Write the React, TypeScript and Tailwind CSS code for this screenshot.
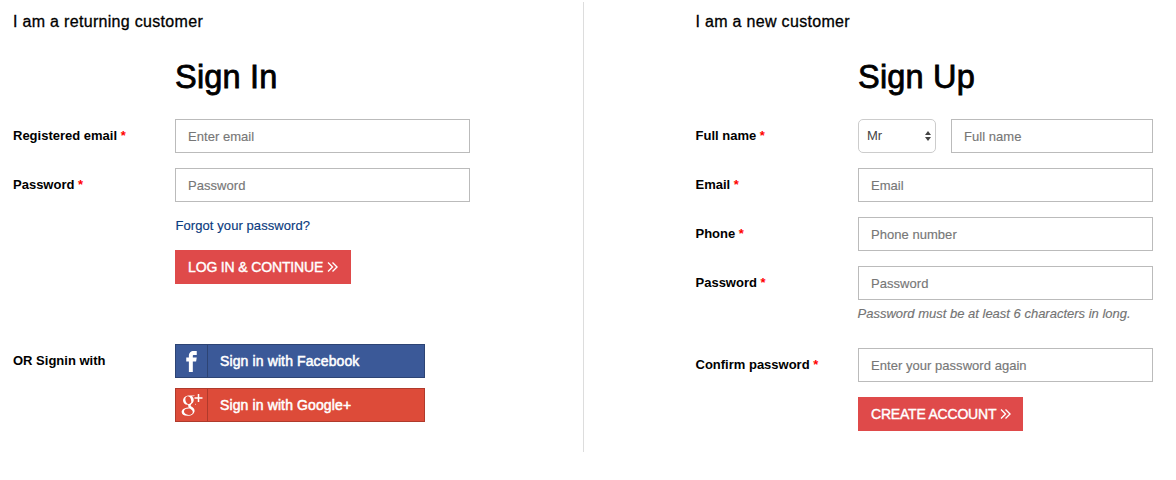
import type { ReactNode } from "react";
import { ImFacebook } from "react-icons/im";
import { TiSocialGooglePlus } from "react-icons/ti";

function Row({ label, required = true, children, labelWidth = "w-[162px]" }: { label: string; required?: boolean; children: ReactNode; labelWidth?: string }) {
  return (
    <div className="flex h-[34px] w-full">
      <div className={`shrink-0 whitespace-nowrap pt-2 text-[13px] font-bold leading-[18px] ${labelWidth}`}>
        {label} {required && <span className="text-[#f00]">*</span>}
      </div>
      {children}
    </div>
  );
}

function Field({ placeholder, type = "text" }: { placeholder: string; type?: string }) {
  return (
    <input
      type={type}
      placeholder={placeholder}
      className="h-[34px] min-w-0 flex-1 border border-[#bbb] bg-white px-3 text-[13px] tracking-[0.04px] text-[#555] outline-none placeholder:text-[#777] [-webkit-text-stroke:0.15px_#777]"
    />
  );
}

function ActionButton({ label, className }: { label: string; className: string }) {
  return (
    <button
      className={`flex h-[34px] items-center gap-[4px] whitespace-nowrap bg-[#df4a4a] pl-[13px] text-[14px] text-white [-webkit-text-stroke:0.4px_white] ${className}`}
    >
      <span>{label}</span>
      <svg width="11" height="12" viewBox="0 0 11 12" fill="none" stroke="currentColor" strokeWidth="1.4" className="shrink-0">
        <path d="M1 1.500 5.500 6 1 10.500M5.500 1.500 10 6l-4.500 4.500" />
      </svg>
    </button>
  );
}

function GooglePlusIcon() {
  return (
    <svg width="31" height="32" viewBox="0 0 31 32">
      <clipPath id="g-area">
        <rect width="19.600" height="32" />
      </clipPath>
      <g clipPath="url(#g-area)">
        <TiSocialGooglePlus x="-1.500" y="-0.500" size={33} />
      </g>
      <path d="M18.500 9h8M22.500 5v8" stroke="white" strokeWidth="1.500" />
    </svg>
  );
}

function SocialButton({ label, icon, className, dividerClass }: { label: string; icon: ReactNode; className: string; dividerClass: string }) {
  return (
    <button className={`flex h-[34px] w-[250px] items-center border text-white ${className}`}>
      <span className={`flex h-full w-8 shrink-0 items-center justify-center border-r ${dividerClass}`}>{icon}</span>
      <span className="whitespace-nowrap pl-3 text-[14px] tracking-[0.12px] [-webkit-text-stroke:0.5px_white]">{label}</span>
    </button>
  );
}

export default function App() {
  return (
    <div className="flex h-[480px] w-[1176px] overflow-hidden bg-white pt-[2px] font-['Liberation_Sans',Arial,sans-serif] text-black">
      <section className="h-[450px] w-[584px] shrink-0 border-r border-[#ddd] pl-[13px] pt-[10px]">
        <h2 className="text-[16px] leading-[20px] tracking-[0.31px] [-webkit-text-stroke:0.3px_black]">I am a returning customer</h2>
        <h1 className="ml-[162px] mt-[25px] text-[32.500px] leading-[40px] tracking-[0.200px] [-webkit-text-stroke:0.8px_black]">Sign In</h1>
        <form className="mt-[22px] flex w-[457px] flex-col">
          <Row label="Registered email"><Field placeholder="Enter email" /></Row>
          <div className="mt-[15px]"><Row label="Password"><Field placeholder="Password" type="password" /></Row></div>
          <a className="ml-[162.500px] mt-[14px] text-[13px] leading-[20px] tracking-[0.08px] text-[#0a3a7e] [-webkit-text-stroke:0.15px_#0a3a7e]">Forgot your password?</a>
          <ActionButton label="LOG IN & CONTINUE" className="ml-[162px] mt-[14px] w-[176px] tracking-[-0.15px]" />
          <div className="mt-[60px]">
            <Row label="OR Signin with" required={false}>
              <SocialButton label="Sign in with Facebook" className="border-[#2d4474] bg-[#3b5998]" dividerClass="border-[#2d4474]" icon={<ImFacebook size={21} />} />
            </Row>
          </div>
          <div className="ml-[162px] mt-[10px]">
            <SocialButton label="Sign in with Google+" className="border-[#b03a2b] bg-[#dd4b39]" dividerClass="border-[#b03a2b]" icon={<GooglePlusIcon />} />
          </div>
        </form>
      </section>
      <section className="w-[592px] pl-[111.500px] pt-[10px]">
        <h2 className="text-[16px] leading-[20px] tracking-[0.31px] [-webkit-text-stroke:0.3px_black]">I am a new customer</h2>
        <h1 className="ml-[162.500px] mt-[25px] text-[32.500px] leading-[40px] tracking-[0.200px] [-webkit-text-stroke:0.8px_black]">Sign Up</h1>
        <form className="mt-[22px] flex w-[457.500px] flex-col gap-[15px]">
          <Row label="Full name" labelWidth="w-[162.500px]">
            <button type="button" className="mr-[15px] flex h-[34px] w-[78px] shrink-0 items-center justify-between rounded-[5px] border border-[#ccc] pl-2 pr-1 text-[13px] text-[#444]">
              <span>Mr</span>
              <svg width="6" height="12" viewBox="0 0 6 12" fill="#444"><path d="M0 5 3 1l3 4ZM0 7h6l-3 4Z" /></svg>
            </button>
            <Field placeholder="Full name" />
          </Row>
          <Row label="Email" labelWidth="w-[162.500px]"><Field placeholder="Email" type="email" /></Row>
          <Row label="Phone" labelWidth="w-[162.500px]"><Field placeholder="Phone number" type="tel" /></Row>
          <div>
            <Row label="Password" labelWidth="w-[162.500px]"><Field placeholder="Password" type="password" /></Row>
            <p className="ml-[162px] mt-[4px] h-[29px] whitespace-nowrap text-[13px] italic leading-[20px] text-[#737373] [-webkit-text-stroke:0.15px_#737373]">Password must be at least 6 characters in long.</p>
          </div>
          <Row label="Confirm password" labelWidth="w-[162.500px]"><Field placeholder="Enter your password again" type="password" /></Row>
          <ActionButton label="CREATE ACCOUNT" className="ml-[162.500px] w-[165px] tracking-[-0.2px]" />
        </form>
      </section>
    </div>
  );
}
